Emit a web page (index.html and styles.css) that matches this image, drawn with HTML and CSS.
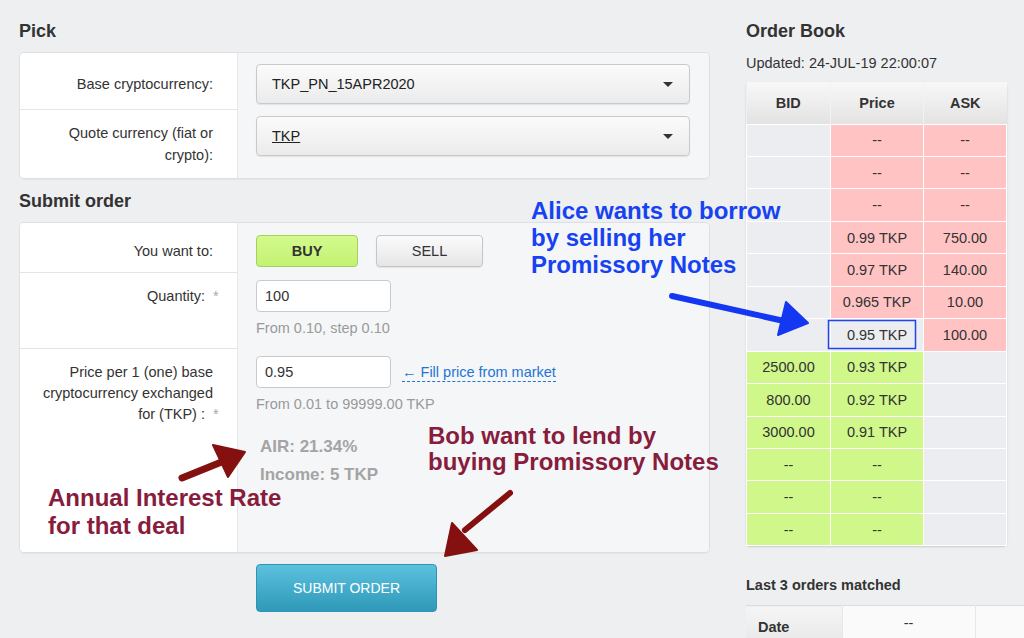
FILE: index.html
```html
<!DOCTYPE html>
<html lang="en">
<head>
    <meta charset="UTF-8">
    <title>Exchange - Submit order</title>
    <link rel="stylesheet" href="styles.css">
</head>
<body>
    <div class="page">
        <div class="main">
            <h2>Pick</h2>
            <div class="panel">
                <div class="lbl lbl-base">Base cryptocurrency:</div>
                <div class="ctl ctl-base">
                    <div class="select"><span>TKP_PN_15APR2020</span><span class="caret"></span></div>
                </div>
                <div class="lbl lbl-quote last">Quote currency (fiat or crypto):</div>
                <div class="ctl ctl-quote">
                    <div class="select"><span class="ul">TKP</span><span class="caret"></span></div>
                </div>
            </div>

            <h2>Submit order</h2>
            <div class="panel">
                <div class="lbl lbl-side">You want to:</div>
                <div class="ctl ctl-side">
                    <button class="btn btn-buy">BUY</button>
                    <button class="btn btn-sell">SELL</button>
                </div>
                <div class="lbl lbl-qty">Quantity:<span class="req">*</span></div>
                <div class="ctl ctl-qty">
                    <div class="input">100</div>
                    <div class="help">From 0.10, step 0.10</div>
                </div>
                <div class="lbl lbl-price last">Price per 1 (one) base cryptocurrency exchanged for (TKP) :<span class="req">*</span></div>
                <div class="ctl ctl-price">
                    <div class="price-line">
                        <div class="input">0.95</div>
                        <a class="fill" href="#">&larr; Fill price from market</a>
                    </div>
                    <div class="help">From 0.01 to 99999.00 TKP</div>
                    <div class="stat">AIR: 21.34%</div>
                    <div class="stat">Income: 5 TKP</div>
                </div>
            </div>
            <button class="submit">SUBMIT ORDER</button>
        </div>

        <div class="side">
            <h2>Order Book</h2>
            <div class="updated">Updated: 24-JUL-19 22:00:07</div>
            <table class="book">
                <thead>
                    <tr><th>BID</th><th>Price</th><th>ASK</th></tr>
                </thead>
                <tbody>
                    <tr><td></td><td class="ask">--</td><td class="ask">--</td></tr>
                    <tr><td></td><td class="ask">--</td><td class="ask">--</td></tr>
                    <tr><td></td><td class="ask">--</td><td class="ask">--</td></tr>
                    <tr><td></td><td class="ask">0.99 TKP</td><td class="ask">750.00</td></tr>
                    <tr><td></td><td class="ask">0.97 TKP</td><td class="ask">140.00</td></tr>
                    <tr><td></td><td class="ask">0.965 TKP</td><td class="ask">10.00</td></tr>
                    <tr><td></td><td>0.95 TKP</td><td class="ask">100.00</td></tr>
                    <tr><td class="bid">2500.00</td><td class="bid">0.93 TKP</td><td></td></tr>
                    <tr><td class="bid">800.00</td><td class="bid">0.92 TKP</td><td></td></tr>
                    <tr><td class="bid">3000.00</td><td class="bid">0.91 TKP</td><td></td></tr>
                    <tr><td class="bid">--</td><td class="bid">--</td><td></td></tr>
                    <tr><td class="bid">--</td><td class="bid">--</td><td></td></tr>
                    <tr><td class="bid">--</td><td class="bid">--</td><td></td></tr>
                </tbody>
            </table>

            <h3>Last 3 orders matched</h3>
            <table class="matched">
                <tr><th>Date</th><td>--</td><td></td></tr>
            </table>
        </div>
    </div>

    <!-- hand drawn annotations over the screenshot -->
    <svg class="marks" width="1024" height="638" viewBox="0 0 1024 638">
        <rect x="828.5" y="320.5" width="87" height="28" fill="none" stroke="#1f45f0" stroke-width="1.5"/>
        <g fill="#1438f2" stroke="#1438f2" stroke-linejoin="round">
            <path d="M672 296 L784 321" stroke-width="6" stroke-linecap="round" fill="none"/>
            <path d="M786 302 L808 323 L778 335 Z" stroke-width="2"/>
        </g>
        <g fill="#84100f" stroke="#84100f" stroke-linejoin="round">
            <path d="M182 478 L224 461" stroke-width="7" stroke-linecap="round" fill="none"/>
            <path d="M213 445 L245 452 L228 477 Z" stroke-width="2"/>
            <path d="M510 493 L465 530" stroke-width="6" stroke-linecap="round" fill="none"/>
            <path d="M452 523 L477 550 L445 556 Z" stroke-width="2"/>
        </g>
    </svg>
    <div class="note note-alice">Alice wants to borrow<br>by selling her<br>Promissory Notes</div>
    <div class="note note-bob">Bob want to lend by<br>buying Promissory Notes</div>
    <div class="note note-air">Annual Interest Rate<br>for that deal</div>
</body>
</html>
```

FILE: styles.css
```css
* {
    margin: 0;
    padding: 0;
    box-sizing: border-box;
}

body {
    background: #eeeff1;
    color: #333;
    font-family: 'Liberation Sans', Arial, sans-serif;
    font-size: 14.5px;
    width: 1024px;
    height: 638px;
    overflow: hidden;
    position: relative;
}

.page {
    display: flex;
    padding: 20px 0 0 19px;
}

.main {
    width: 691px;
}

h2 {
    font-size: 18px;
    line-height: 22px;
    font-weight: bold;
    color: #333;
    margin-bottom: 10px;
}

/* two column form panels */
.panel {
    display: grid;
    grid-template-columns: 217px 1fr;
    border: 1px solid #dedfe2;
    border-radius: 5px;
    overflow: hidden;
    margin-bottom: 11px;
    box-shadow: 0 1px 1px rgba(0, 0, 0, 0.04);
}

.lbl {
    background: #fff;
    text-align: right;
    padding-right: 24px;
    padding-left: 20px;
    border-bottom: 1px solid #e4e5e8;
}

.lbl.last {
    border-bottom: none;
}

.ctl {
    background: #f5f6f8;
    border-left: 1px solid #e6e7ea;
    padding: 0 19px 0 18px;
}

.req {
    color: #aaa;
    display: inline-block;
    width: 0;
    margin-left: 8px;
}

.lbl-base { padding-top: 11px; line-height: 40px; }
.ctl-base { padding-top: 11px; padding-bottom: 6px; }
.lbl-quote { padding-top: 12px; padding-bottom: 12px; line-height: 22px; }
.ctl-quote { padding-top: 6px; }

.lbl-side { padding-top: 12px; line-height: 32px; }
.ctl-side { padding-top: 12px; padding-bottom: 6px; display: flex; gap: 18px; }
.lbl-qty { padding-top: 7px; line-height: 32px; }
.ctl-qty { padding-top: 7px; padding-bottom: 11px; }
.lbl-price { padding-top: 13px; line-height: 21px; }
.ctl-price { padding-top: 7px; padding-bottom: 63px; }

.select {
    display: flex;
    align-items: center;
    justify-content: space-between;
    height: 40px;
    padding: 0 16px 0 15px;
    border: 1px solid #c9c9c9;
    border-radius: 4px;
    background: linear-gradient(#fbfbfb, #ebebeb);
    box-shadow: 0 1px 1px rgba(0, 0, 0, 0.08);
    color: #222;
}

.select .ul {
    text-decoration: underline;
}

.caret {
    width: 0;
    height: 0;
    border-left: 5px solid transparent;
    border-right: 5px solid transparent;
    border-top: 5px solid #333;
}

.btn {
    height: 32px;
    border-radius: 4px;
    font-family: inherit;
    font-size: 14.5px;
    color: #333;
}

.btn-buy {
    width: 102px;
    font-weight: bold;
    background: linear-gradient(#d3fa8d, #c3f272);
    border: 1px solid #a6cf5f;
}

.btn-sell {
    width: 107px;
    background: linear-gradient(#fbfbfb, #e6e6e6);
    border: 1px solid #c6c6c6;
    box-shadow: 0 1px 1px rgba(0, 0, 0, 0.08);
}

.input {
    width: 135px;
    height: 32px;
    line-height: 30px;
    padding-left: 8px;
    background: #fff;
    border: 1px solid #cacaca;
    border-radius: 4px;
    color: #333;
}

.price-line {
    display: flex;
    align-items: center;
    gap: 11px;
}

.fill {
    color: #2375d4;
    text-decoration: none;
    border-bottom: 1px dashed #2375d4;
    line-height: 17px;
    margin-top: 1px;
}

.help {
    color: #9a9a9a;
    line-height: 20px;
    margin-top: 6px;
}

.stat {
    color: #a4a4a4;
    font-weight: bold;
    font-size: 17px;
    line-height: 28px;
    padding-left: 4px;
}

.help + .stat {
    margin-top: 19px;
}

.submit {
    margin-left: 237px;
    width: 181px;
    height: 48px;
    border: 1px solid #2f93b3;
    border-radius: 4px;
    background: linear-gradient(#5cc1df, #2e99b8);
    color: #fff;
    font-family: inherit;
    font-size: 14px;
}

/* order book column */
.side {
    margin-left: 36px;
    width: 278px;
}

.updated {
    line-height: 22px;
    margin-bottom: 8px;
}

.book {
    width: 261px;
    border-collapse: collapse;
    text-align: center;
    box-shadow: 0 1px 2px rgba(0, 0, 0, 0.15);
    border-radius: 4px;
}

.book th {
    height: 42px;
    font-weight: bold;
    background: linear-gradient(#f8f8f8, #e3e3e3);
    border-left: 1px solid #f2f2f2;
}

.book th:first-child { width: 84px; border-left: none; }
.book th:nth-child(2) { width: 93px; }

.book td {
    height: 32.46px;
    border: 1px solid #fff;
    background: #ecedf0;
    padding: 0;
}

.book td.ask { background: #ffc3c3; }
.book td.bid { background: #cff78a; }

h3 {
    font-size: 14.5px;
    font-weight: bold;
    line-height: 18px;
    margin: 30px 0 11px;
}

.matched {
    width: 278px;
    table-layout: fixed;
    border-collapse: collapse;
    border-top: 1px solid #dcdcdc;
}

.matched th {
    width: 96px;
    height: 42px;
    text-align: left;
    padding-left: 12px;
    background: linear-gradient(#f5f5f5, #e6e6e6);
}

.matched td {
    width: 133px;
    background: #fafafa;
    text-align: center;
    vertical-align: top;
    padding-top: 9px;
    border-left: 1px solid #e8e8e8;
}

.matched td:last-child {
    width: 49px;
}

/* annotations */
.marks {
    position: absolute;
    top: 0;
    left: 0;
    pointer-events: none;
}

.note {
    position: absolute;
    font-weight: bold;
    font-size: 24px;
    line-height: 27px;
}

.note-alice { left: 531px; top: 197px; color: #1742f2; }
.note-bob { left: 428px; top: 423px; line-height: 26px; color: #881c3c; }
.note-air { left: 48px; top: 484px; line-height: 28px; color: #881c3c; }
```
